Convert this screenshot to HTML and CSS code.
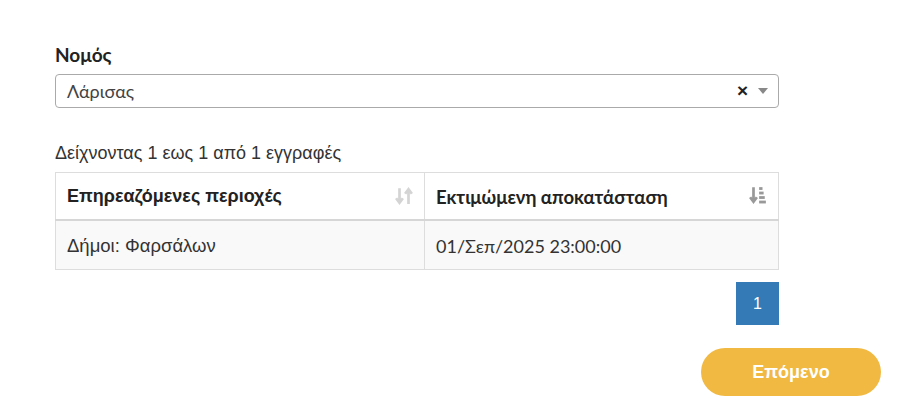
FILE: index.html
```html
<!DOCTYPE html>
<html lang="el">
<head>
    <meta charset="UTF-8">
    <meta name="viewport" content="width=device-width, initial-scale=1.0">
    <title>Διακοπές ρεύματος</title>
    <link rel="stylesheet" href="styles.css">
</head>
<body>
    <div class="container">
        <label class="field-label" for="nomos">Νομός</label>
        <div class="select" id="nomos">
            <span class="select-value">Λάρισας</span>
            <span class="select-clear">×</span>
            <span class="select-arrow"></span>
        </div>

        <div class="info">Δείχνοντας 1 εως 1 από 1 εγγραφές</div>
        <table class="results">
            <thead>
                <tr>
                    <th class="col-area">
                        <span>Επηρεαζόμενες περιοχές</span>
                        <svg class="sort-icon" width="18" height="18" viewBox="0 0 16 16">
                            <path d="M4 1v12M1 10l3 4 3-4" stroke="#d4d4d4" stroke-width="2.4" fill="none"/>
                            <path d="M12 15V3M9 6l3-4 3 4" stroke="#d4d4d4" stroke-width="2.4" fill="none"/>
                        </svg>
                    </th>
                    <th class="col-date">
                        <span>Εκτιμώμενη αποκατάσταση</span>
                        <svg class="sort-icon" width="18" height="18" viewBox="0 0 16 16">
                            <path d="M4 1v12M1 10l3 4 3-4" stroke="#999" stroke-width="2.4" fill="none"/>
                            <rect x="9" y="1" width="3" height="2.5" fill="#999"/>
                            <rect x="9" y="5" width="4" height="2.5" fill="#999"/>
                            <rect x="9" y="9" width="5" height="2.5" fill="#999"/>
                            <rect x="9" y="13" width="6" height="2.5" fill="#999"/>
                        </svg>
                    </th>
                </tr>
            </thead>
            <tbody>
                <tr>
                    <td class="col-area">Δήμοι: Φαρσάλων</td>
                    <td class="col-date">01/Σεπ/2025 23:00:00</td>
                </tr>
            </tbody>
        </table>

        <div class="pagination">
            <a class="page active">1</a>
        </div>

        <div class="actions">
            <button class="next-btn">Επόμενο</button>
        </div>
    </div>
</body>
</html>
```

FILE: styles.css
```css
body {
    margin: 0;
    padding: 0;
    background-color: #fff;
    font-family: "Liberation Sans", Arial, sans-serif;
    color: #333;
}
.container {
    padding: 43px 19px 0 55px;
}
.field-label {
    display: block;
    font-family: Lato, "Noto Sans", sans-serif;
    font-weight: bold;
    font-size: 19px;
    color: #222;
    margin-bottom: 8px;
}
.select {
    width: 724px;
    height: 34px;
    box-sizing: border-box;
    border: 1px solid #aaa;
    border-radius: 4px;
    display: flex;
    align-items: center;
    padding: 0 10px 0 11px;
}
.select-value {
    flex: 1;
    font-family: Lato, "Noto Sans", sans-serif;
    font-size: 18px;
    color: #444;
}
.select-clear {
    font-size: 19px;
    font-weight: bold;
    color: #222;
    margin-right: 10px;
}
.select-arrow {
    width: 0;
    height: 0;
    border-left: 5px solid transparent;
    border-right: 5px solid transparent;
    border-top: 6px solid #888;
}
.info {
    margin-top: 35px;
    font-size: 18px;
    color: #333;
    margin-bottom: 8px;
}
.results {
    width: 724px;
    border-collapse: collapse;
    font-size: 18px;
}
.results th,
.results td {
    border: 1px solid #ddd;
    text-align: left;
    padding: 0 11px;
}
.results th {
    height: 46px;
    font-weight: bold;
    color: #222;
    border-bottom: 2px solid #d6d6d6;
}
.results th span {
    vertical-align: middle;
}
.results .col-area {
    width: 346px;
}
.results th.col-date {
    font-family: Lato, "Noto Sans", sans-serif;
    font-size: 18.5px;
}
.sort-icon {
    float: right;
    margin-top: 2px;
}
.results td {
    height: 46px;
    background-color: #f9f9f9;
    color: #333;
    padding-top: 2px;
}
.results td.col-area {
    font-size: 18.5px;
}
.results td.col-date {
    font-family: Lato, "Noto Sans", sans-serif;
}
.pagination {
    width: 724px;
    display: flex;
    justify-content: flex-end;
    margin-top: 12px;
}
.page {
    width: 43px;
    height: 43px;
    display: flex;
    align-items: center;
    justify-content: center;
    font-size: 16px;
}
.page.active {
    background-color: #337ab7;
    color: #fff;
}
.actions {
    display: flex;
    justify-content: flex-end;
    margin-top: 23px;
}
.next-btn {
    width: 180px;
    height: 48px;
    border: none;
    border-radius: 24px;
    background-color: #f1b941;
    color: #fff;
    font-family: "Liberation Sans", Arial, sans-serif;
    font-size: 18px;
    font-weight: bold;
    cursor: pointer;
}
```
